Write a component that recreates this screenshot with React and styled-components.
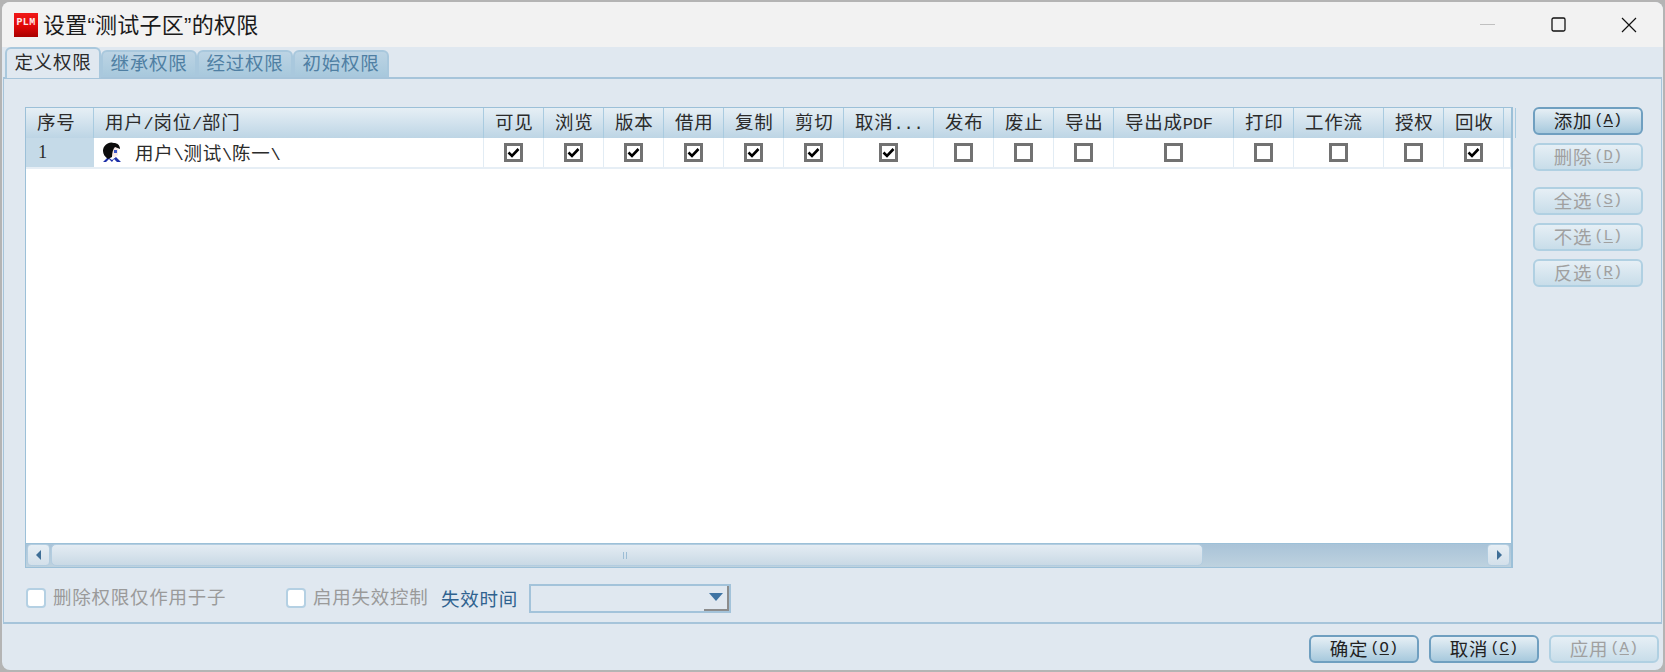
import React from "react";
import styled, { createGlobalStyle } from "styled-components";

const GlobalStyle = createGlobalStyle`
  html, body {
    margin: 0;
    padding: 0;
    background: #b4b4b4;
  }
  body {
    font-family: "Noto Sans CJK SC", sans-serif;
    font-size: 18.5px;
    letter-spacing: 0.75px;
    color: #2b2b2b;
  }
`;

const Desktop = styled.div`
  width: 1665px;
  height: 672px;
  padding: 2px;
  box-sizing: border-box;
  overflow: hidden;
`;

const Window = styled.div`
  width: 1661px;
  height: 668px;
  display: flex;
  flex-direction: column;
  background: #e0e8f0;
  border-radius: 8px;
  overflow: hidden;
`;

const TitleBar = styled.header`
  height: 45px;
  flex: none;
  display: flex;
  align-items: center;
  background: #f2f2f2;
  padding-left: 12px;
`;

const Logo = styled.div`
  width: 24px;
  height: 24px;
  margin-right: 5px;
  display: flex;
  align-items: center;
  justify-content: center;
  background: linear-gradient(#f01818 0%, #e00808 55%, #a80000 100%);
  color: #ffe8e8;
  font-family: "Liberation Mono", monospace;
  font-size: 10px;
  font-weight: 700;
  letter-spacing: 0.3px;
  line-height: 1;
  padding-bottom: 4px;
  box-sizing: border-box;
`;

const Title = styled.h1`
  margin: 0 0 3px;
  flex: 1;
  font-family: "Liberation Sans", "Noto Sans CJK SC", sans-serif;
  font-size: 22px;
  font-weight: 400;
  letter-spacing: 0.25px;
  color: #1a1a1a;
`;

const WindowButtons = styled.div`
  display: flex;
  align-items: center;
  padding-right: 26px;
`;

const WindowButton = styled.span`
  width: 16px;
  height: 16px;
  margin-left: ${(p) => p.$gap}px;
  display: block;

  svg {
    display: block;
  }
`;

const TabStrip = styled.nav`
  height: 30px;
  flex: none;
  display: flex;
  align-items: flex-end;
  padding-left: 3px;
  position: relative;
  z-index: 1;
`;

const Tab = styled.div`
  width: 96px;
  height: ${(p) => (p.$active ? 31 : 27)}px;
  margin-bottom: ${(p) => (p.$active ? -1 : 0)}px;
  box-sizing: border-box;
  display: flex;
  align-items: center;
  justify-content: center;
  padding-bottom: ${(p) => (p.$active ? 6 : 3)}px;
  border: 2px solid #a9c8dd;
  border-bottom: ${(p) => (p.$active ? "none" : "2px solid #a9c8dd")};
  border-radius: 6px 6px 0 0;
  background: ${(p) =>
    p.$active ? "#e0e8f0" : "linear-gradient(#bcd4e4, #a9c9dd)"};
  color: ${(p) => (p.$active ? "#2b2b2b" : "#4f7fa3")};
`;

const Panel = styled.section`
  flex: none;
  height: 547px;
  margin: 0 1px;
  box-sizing: border-box;
  border: 1px solid #a6c4da;
  border-width: 2px 1px 2px 1px;
  padding: 28px 18px 0 21px;
  display: flex;
  flex-direction: column;
`;

const PanelMain = styled.div`
  display: flex;
  justify-content: space-between;
`;

const TableBox = styled.div`
  width: 1488px;
  height: 461px;
  box-sizing: border-box;
  border: 1px solid #9cc0d8;
  border-width: 1px 2px 1px 1px;
  background: #fff;
  display: flex;
  flex-direction: column;
`;

const GridRow = styled.div`
  display: grid;
  grid-template-columns: 68px 390px repeat(6, 60px) 90px 60px 60px 60px 120px 60px 90px 60px 60px 1fr;
  flex: none;
`;

const HeaderRow = styled(GridRow)`
  height: 30px;
  background: linear-gradient(#e6eff5, #bdd5e5);
`;

const BodyRow = styled(GridRow)`
  height: 31px;
  border-bottom: 2px solid #e6eef5;
  box-sizing: border-box;
`;

const HeaderCell = styled.div`
  display: flex;
  align-items: center;
  padding: 0 0 4px 11px;
  border-right: 1px solid #a9cbe0;
  box-sizing: border-box;
  white-space: nowrap;
  overflow: hidden;
`;

const NumberCell = styled.div`
  background: #c5dae8;
  display: flex;
  align-items: center;
  padding: 0 0 1px 12px;
  font-family: "Liberation Serif", serif;
`;

const UserCell = styled.div`
  display: flex;
  align-items: center;
  padding-left: 8px;
  gap: 13px;
  border-right: 1px solid #e2ecf4;
  white-space: nowrap;
`;

const UserPath = styled.span`
  padding-bottom: 2px;
`;

const CheckCell = styled.div`
  display: flex;
  align-items: center;
  justify-content: center;
  border-right: 1px solid #e2ecf4;
`;

const CheckMark = styled.span`
  width: 19px;
  height: 19px;
  box-sizing: border-box;
  border: 3px solid #727272;
  background: #fff;
  display: flex;
  align-items: center;
  justify-content: center;
`;

const TableFill = styled.div`
  flex: 1;
`;

const ScrollBar = styled.div`
  height: 24px;
  flex: none;
  display: flex;
  border-top: 1px solid #9cc0d8;
  box-sizing: border-box;
  background: linear-gradient(#a9c3d8, #bed2df);
`;

const ScrollButton = styled.div`
  width: 23px;
  flex: none;
  margin: 0 1px 1px;
  box-sizing: border-box;
  border: 1px solid #b3cde0;
  border-radius: 4px;
  background: linear-gradient(#e6eef4, #d3e0ea);
  display: flex;
  align-items: center;
  justify-content: center;
`;

const ScrollThumb = styled.div`
  width: 1152px;
  flex: none;
  box-sizing: border-box;
  border: 1px solid #b3cde0;
  border-radius: 5px;
  margin-bottom: 1px;
  background: linear-gradient(#e4ecf3, #c9d9e5);
  display: flex;
  align-items: center;
  justify-content: center;
  gap: 2px;
  padding-right: 5px;
`;

const Grip = styled.i`
  width: 1px;
  height: 7px;
  background: #9cbdd5;
`;

const ScrollTrack = styled.div`
  flex: 1;
`;

const SideColumn = styled.aside`
  width: 110px;
  display: flex;
  flex-direction: column;
  gap: 16px;
`;

const ButtonGroup = styled.div`
  display: flex;
  flex-direction: column;
  gap: 8px;
`;

const Button = styled.div`
  width: 110px;
  height: 28px;
  box-sizing: border-box;
  display: flex;
  align-items: center;
  justify-content: center;
  padding-bottom: 3px;
  border-radius: 6px;
  border: 2px solid ${(p) => (p.$disabled ? "#b0d0e2" : "#6f9fc0")};
  background: ${(p) =>
    p.$disabled
      ? "linear-gradient(#e6eff5, #c8dde9)"
      : "linear-gradient(#e6eff5, #a7c9dd)"};
  color: ${(p) => (p.$disabled ? "#a0a0a0" : "#222")};
`;

const KeyHint = styled.span`
  font-family: "Liberation Mono", monospace;
  font-size: 15.5px;
  letter-spacing: 0;
  margin-left: 2px;
  u {
    text-underline-offset: 2px;
  }
`;

const Latin = styled.span`
  font-family: "Liberation Mono", monospace;
  font-size: 17px;
  letter-spacing: -0.2px;
`;

const OptionRow = styled.div`
  margin-top: 15px;
  height: 30px;
  display: flex;
  align-items: center;
  padding-left: 1px;
`;

const OptionBox = styled.span`
  width: 20px;
  height: 20px;
  box-sizing: border-box;
  flex: none;
  background: #fff;
  border: 2px solid #b4d0e3;
  border-radius: 4px;
`;

const OptionLabel = styled.span`
  width: ${(p) => p.$width}px;
  flex: none;
  margin-left: 7px;
  padding-bottom: 4px;
  color: #9a9a9a;
  white-space: nowrap;
`;

const FieldLabel = styled.span`
  width: 88px;
  flex: none;
  padding-bottom: 1px;
  color: #2f628f;
`;

const Combo = styled.div`
  width: 202px;
  height: 29px;
  box-sizing: border-box;
  border: 2px solid #a3c3da;
  display: flex;
  justify-content: flex-end;
`;

const ComboArrow = styled.div`
  width: 25px;
  box-sizing: border-box;
  border-right: 2px solid #8c8c8c;
  border-bottom: 2px solid #8c8c8c;
  display: flex;
  align-items: center;
  justify-content: center;
`;

const Footer = styled.footer`
  flex: 1;
  display: flex;
  justify-content: flex-end;
  align-items: flex-start;
  gap: 10px;
  padding: 11px 4px 0 0;
`;

const columns = [
  { label: "可见", on: true },
  { label: "浏览", on: true },
  { label: "版本", on: true },
  { label: "借用", on: true },
  { label: "复制", on: true },
  { label: "剪切", on: true },
  { label: "取消...", on: true },
  { label: "发布", on: false },
  { label: "废止", on: false },
  { label: "导出", on: false },
  { label: "导出成PDF", on: false },
  { label: "打印", on: false },
  { label: "工作流", on: false },
  { label: "授权", on: false },
  { label: "回收", on: true },
];

// half-width runs use the mono font so mixed labels keep the dialog's widths
function mixed(text) {
  return (
    <span>
      {text
        .split(/([\x21-\x7e]+)/)
        .map((part, i) => (i % 2 ? <Latin key={i}>{part}</Latin> : part))}
    </span>
  );
}

function UserIcon() {
  return (
    <svg width="20" height="21" viewBox="0 0 20 21">
      <path d="M9 5 L16 5 L16 13 L13 15 L9 14 Z" fill="#f6e8e6" />
      <path d="M12 8 L15 8 L15 11 L12 11 Z" fill="#3a56c8" />
      <path d="M1 20 L6 15 L10 18 L14 15 L19 20 L15 20 L12 17 L10 20 L7 17 L4 20 Z" fill="#1c2fa8" />
      <path d="M1 9 C1 3 7 -1 12 1 C15 1 18 3 18 7 L13 5 C11 7 10 11 10 15 L6 17 C3 15 1 12 1 9 Z" fill="#0c0c0c" />
    </svg>
  );
}

function Check() {
  return (
    <svg width="13" height="11" viewBox="0 0 13 11">
      <path d="M1.5 5.5 L5 9 L11.5 2" fill="none" stroke="#000" strokeWidth="2.6" />
    </svg>
  );
}

function ActionButton({ label, hint, disabled }) {
  return (
    <Button $disabled={disabled}>
      {label}
      <KeyHint>
        (<u>{hint}</u>)
      </KeyHint>
    </Button>
  );
}

export default function App() {
  return (
    <>
      <GlobalStyle />
      <Desktop>
        <Window>
          <TitleBar>
            <Logo>PLM</Logo>
            <Title>设置“测试子区”的权限</Title>
            <WindowButtons>
              <WindowButton $gap={0}>
                <svg width="16" height="16" viewBox="0 0 16 16">
                  <path d="M0 7.5 H15" stroke="#c0c0c0" strokeWidth="1" />
                </svg>
              </WindowButton>
              <WindowButton $gap={55}>
                <svg width="16" height="16" viewBox="0 0 16 16">
                  <rect x="1" y="1" width="13" height="13" rx="1.5" fill="none" stroke="#111" strokeWidth="1.3" />
                </svg>
              </WindowButton>
              <WindowButton $gap={54}>
                <svg width="16" height="16" viewBox="0 0 16 16">
                  <path d="M1 1 L15 15 M15 1 L1 15" stroke="#111" strokeWidth="1.2" />
                </svg>
              </WindowButton>
            </WindowButtons>
          </TitleBar>
          <TabStrip>
            <Tab $active>定义权限</Tab>
            <Tab>继承权限</Tab>
            <Tab>经过权限</Tab>
            <Tab>初始权限</Tab>
          </TabStrip>
          <Panel>
            <PanelMain>
              <TableBox>
                <HeaderRow>
                  <HeaderCell>序号</HeaderCell>
                  <HeaderCell>{mixed("用户/岗位/部门")}</HeaderCell>
                  {columns.map((c) => (
                    <HeaderCell key={c.label}>{mixed(c.label)}</HeaderCell>
                  ))}
                  <HeaderCell />
                </HeaderRow>
                <BodyRow>
                  <NumberCell>1</NumberCell>
                  <UserCell>
                    <UserIcon />
                    <UserPath>{mixed("用户\\测试\\陈一\\")}</UserPath>
                  </UserCell>
                  {columns.map((c) => (
                    <CheckCell key={c.label}>
                      <CheckMark>{c.on && <Check />}</CheckMark>
                    </CheckCell>
                  ))}
                  <CheckCell />
                </BodyRow>
                <TableFill />
                <ScrollBar>
                  <ScrollButton>
                    <svg width="6" height="10" viewBox="0 0 6 10">
                      <path d="M5 0 V10 L0 5 Z" fill="#3f6f97" />
                    </svg>
                  </ScrollButton>
                  <ScrollThumb>
                    <Grip />
                    <Grip />
                  </ScrollThumb>
                  <ScrollTrack />
                  <ScrollButton>
                    <svg width="6" height="10" viewBox="0 0 6 10">
                      <path d="M1 0 V10 L6 5 Z" fill="#3f6f97" />
                    </svg>
                  </ScrollButton>
                </ScrollBar>
              </TableBox>
              <SideColumn>
                <ButtonGroup>
                  <ActionButton label="添加" hint="A" />
                  <ActionButton label="删除" hint="D" disabled />
                </ButtonGroup>
                <ButtonGroup>
                  <ActionButton label="全选" hint="S" disabled />
                  <ActionButton label="不选" hint="L" disabled />
                  <ActionButton label="反选" hint="R" disabled />
                </ButtonGroup>
              </SideColumn>
            </PanelMain>
            <OptionRow>
              <OptionBox />
              <OptionLabel $width={233}>删除权限仅作用于子</OptionLabel>
              <OptionBox />
              <OptionLabel $width={128}>启用失效控制</OptionLabel>
              <FieldLabel>失效时间</FieldLabel>
              <Combo>
                <ComboArrow>
                  <svg width="14" height="8" viewBox="0 0 14 8">
                    <path d="M0 0 H14 L7 8 Z" fill="#3f74a3" />
                  </svg>
                </ComboArrow>
              </Combo>
            </OptionRow>
          </Panel>
          <Footer>
            <ActionButton label="确定" hint="O" />
            <ActionButton label="取消" hint="C" />
            <ActionButton label="应用" hint="A" disabled />
          </Footer>
        </Window>
      </Desktop>
    </>
  );
}
